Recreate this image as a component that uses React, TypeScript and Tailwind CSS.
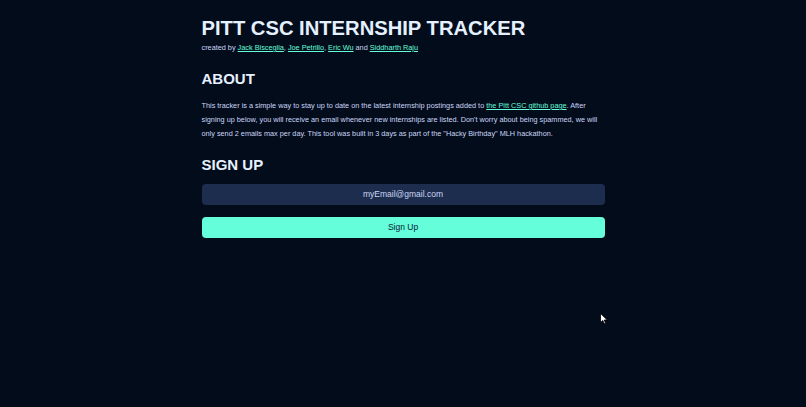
import React from "react";

export default function App() {
  return (
    <div className="relative min-h-screen w-full bg-[#020c1b] font-['Liberation_Sans',Arial,sans-serif] text-[#e6f1ff]">
      <div className="mx-auto w-[403px] pt-[16px]">
        <h1 className="text-[20.2px] leading-[24px] font-bold text-[#e6f1ff]">PITT CSC INTERNSHIP TRACKER</h1>
        <p className="mt-[3px] text-[7.3px] leading-[10px] text-[#ccd6f6]">
          created by{" "}
          <a className="text-[#64ffda] underline" href="#">Jack Bisceglia</a>,{" "}
          <a className="text-[#64ffda] underline" href="#">Joe Petrillo</a>,{" "}
          <a className="text-[#64ffda] underline" href="#">Eric Wu</a> and{" "}
          <a className="text-[#64ffda] underline" href="#">Siddharth Raju</a>
        </p>
        <h2 className="mt-[17px] text-[15px] leading-[18px] font-bold text-[#e6f1ff]">ABOUT</h2>
        <p className="mt-[11px] text-[7.3px] leading-[14px] text-[#ccd6f6]">
          This tracker is a simple way to stay up to date on the latest internship postings added to{" "}
          <a className="text-[#64ffda] underline" href="#">the Pitt CSC github page</a>. After signing up below, you will receive an email whenever new internships are listed. Don't worry about being spammed, we will only send 2 emails max per day. This tool was built in 3 days as part of the "Hacky Birthday" MLH hackathon.
        </p>
        <h2 className="mt-[15px] text-[15px] leading-[18px] font-bold text-[#e6f1ff]">SIGN UP</h2>
        <div className="mt-[10px] flex h-[21px] items-center justify-center rounded-[4px] bg-[#1d2d4d] text-[8.5px] text-[#ccd6f6]">
          myEmail@gmail.com
        </div>
        <button className="mt-[12px] flex h-[21px] w-full items-center justify-center rounded-[4px] bg-[#64ffda] text-[8.5px] text-[#0a192f]">
          Sign Up
        </button>
      </div>
      <svg className="absolute left-[600px] top-[313px]" width="8" height="12" viewBox="0 0 8 12">
        <path d="M0.5 0.5 L0.5 9.5 L2.8 7.4 L4.3 10.8 L5.6 10.2 L4.2 7 L7.3 7 Z" fill="#fff" stroke="#000" strokeWidth="0.8" />
      </svg>
    </div>
  );
}
